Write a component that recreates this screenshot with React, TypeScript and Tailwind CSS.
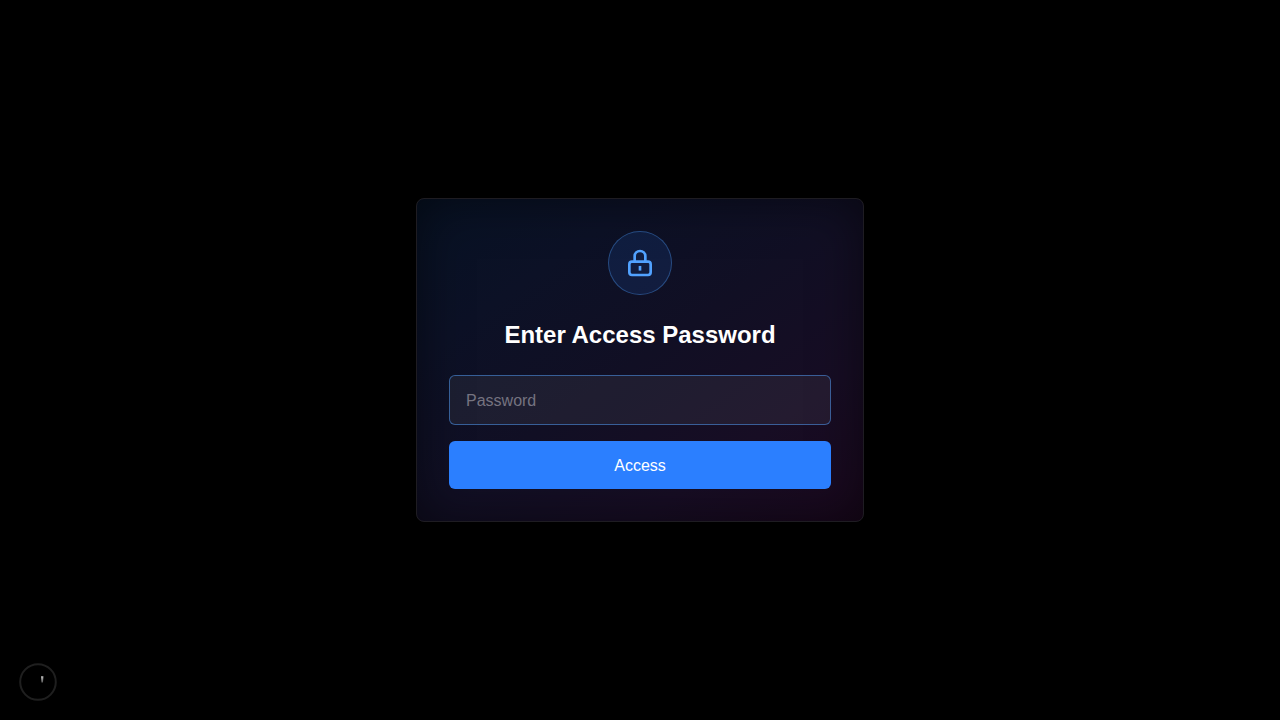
export default function App() {
  return (
    <div className="flex min-h-screen items-center justify-center bg-black p-4 font-['Liberation_Sans',Arial,sans-serif] text-white antialiased">
      <main className="w-full max-w-md rounded-lg border border-[#1e1c22] bg-[linear-gradient(145deg,#071224_0%,#0c1126_25%,#110f24_50%,#170d24_75%,#1a081d_100%)] bg-origin-border p-8 shadow-[inset_0_0_50px_rgba(0,0,0,0.5)]">
        <form className="flex flex-col" onSubmit={(e) => e.preventDefault()}>
          <div className="mx-auto flex size-16 items-center justify-center rounded-full border border-[#51a2ff]/35 bg-[#2b7fff]/12">
            <svg
              className="size-8 text-[#51a2ff]"
              viewBox="0 0 24 24"
              fill="none"
              stroke="currentColor"
              strokeWidth="2"
              strokeLinejoin="round"
              aria-hidden="true"
            >
              <path d="M6 21h12a2 2 0 002-2v-6a2 2 0 00-2-2H6a2 2 0 00-2 2v6a2 2 0 002 2zM16 11V7a4 4 0 00-8 0v4h8z" />
              <path d="M12 14.2v3.5" />
            </svg>
          </div>
          <h1 className="my-6 text-center text-2xl font-bold">
            <label htmlFor="password">Enter Access Password</label>
          </h1>
          <input
            id="password"
            type="password"
            placeholder="Password"
            className="mb-4 w-full rounded-md border border-[#51a2ff]/50 bg-white/6 px-4 pt-[13px] pb-[11px] text-base text-white outline-none placeholder:text-[#757380]"
          />
          <button type="submit" className="w-full rounded-md bg-[#2b7fff] px-4 pt-[13px] pb-[11px] text-base text-white">
            Access
          </button>
        </form>
      </main>
      <div className="fixed bottom-5 left-5 size-9" aria-hidden="true">
        <svg className="size-9 overflow-visible" viewBox="0 0 36 36" fill="none">
          <defs>
            <linearGradient id="tick" x1="0" y1="12" x2="0" y2="19" gradientUnits="userSpaceOnUse">
              <stop offset="0" stopColor="#c8c8c8" />
              <stop offset="1" stopColor="#505050" />
            </linearGradient>
          </defs>
          <circle cx="18" cy="18" r="17.8" stroke="#1f1f1f" strokeWidth="2" />
          <path d="M21 12.3h2.4l-.4 6.2h-1.6z" fill="url(#tick)" />
        </svg>
      </div>
    </div>
  );
}
